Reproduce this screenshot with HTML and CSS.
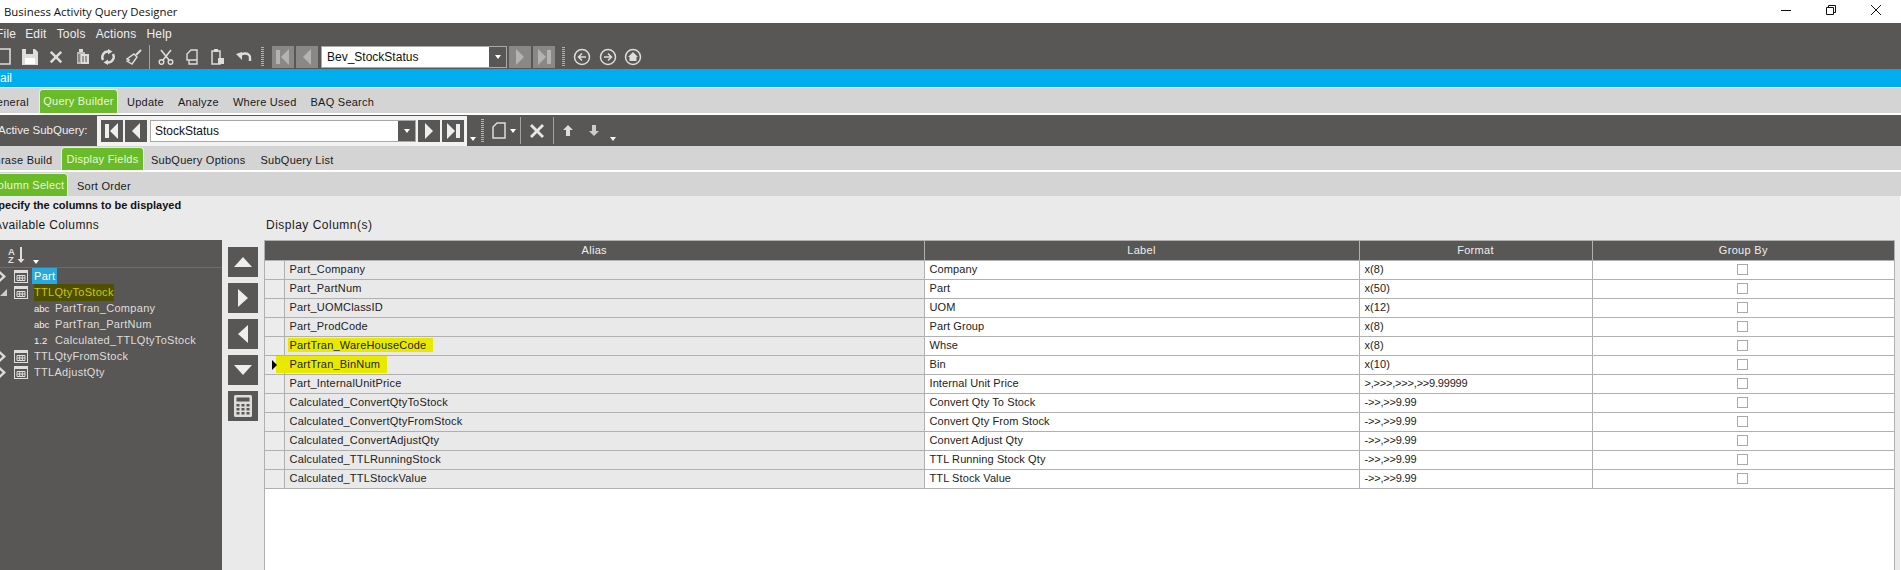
FILE: index.html
```html
<!DOCTYPE html>
<html lang="en">
<head>
<meta charset="utf-8">
<title>Business Activity Query Designer</title>
<link rel="stylesheet" href="styles.css">
</head>
<body>
<svg class="defs" width="0" height="0" aria-hidden="true">
  <symbol id="grid" viewBox="0 0 14 13"><rect x=".5" y=".5" width="13" height="12" fill="none" stroke="#ddd"/><rect x="1" y="1" width="12" height="2" fill="#ddd"/><path d="M3 5.5h8v5H3zM3 8h8M5.7 5.5v5M8.3 5.5v5" fill="none" stroke="#ddd"/></symbol>
  <symbol id="expand" viewBox="0 0 7 11"><path d="M0 0l6 5.5L0 11z" fill="#ddd"/><path d="M0 3l2.5 2.5L0 8z" fill="#595755"/></symbol>
  <symbol id="first" viewBox="0 0 22 22"><path d="M4 4h4v14H4zM9 11l8-8v16z" fill="currentColor"/></symbol>
  <symbol id="prev" viewBox="0 0 22 22"><path d="M7 11l8-8v16z" fill="currentColor"/></symbol>
  <symbol id="next" viewBox="0 0 22 22"><path d="M15 11L7 3v16z" fill="currentColor"/></symbol>
  <symbol id="last" viewBox="0 0 22 22"><path d="M14 4h4v14h-4zM13 11L5 3v16z" fill="currentColor"/></symbol>
  <symbol id="cross" viewBox="0 0 16 16"><path d="M3 1l5 5 5-5 2 2-5 5 5 5-2 2-5-5-5 5-2-2 5-5-5-5z" fill="currentColor"/></symbol>
  <symbol id="doc" viewBox="0 0 14 18"><path d="M5 1h8v15H1V5z" fill="none" stroke="currentColor" stroke-width="1.5"/></symbol>
</svg>

<div class="app">
  <header class="titlebar">
    <span class="title">Business Activity Query Designer</span>
    <div class="winctl">
      <svg width="10" height="10" viewBox="0 0 10 10"><path d="M0 5.5h10" stroke="#111" fill="none"/></svg>
      <svg width="10" height="10" viewBox="0 0 10 10"><path d="M.5 2.5h7v7h-7zM2.5 2.5v-2h7v7h-2" stroke="#111" fill="none"/></svg>
      <svg width="10" height="10" viewBox="0 0 10 10"><path d="M0 0l10 10M10 0L0 10" stroke="#111" fill="none"/></svg>
    </div>
  </header>

  <div class="chrome">
    <nav class="menu"><span class="m-file">File</span><span>Edit</span><span>Tools</span><span>Actions</span><span>Help</span></nav>
    <div class="toolbar">
      <svg class="ti ti-new" width="14" height="18" viewBox="0 0 14 18"><path d="M5 1h8v15H-4V1z" fill="none" stroke="#ddd" stroke-width="1.6"/></svg>
      <svg class="ti ti-save" width="16" height="16" viewBox="0 0 16 16"><path d="M0 0h13l3 3v13H0z" fill="#ddd"/><path d="M4 0h7v5H4z" fill="#595755"/><path d="M3 9h10v6H3z" fill="#fff"/></svg>
      <svg class="ti ti-x" width="14" height="14"><use href="#cross" color="#ddd"/></svg>
      <svg class="ti ti-del" width="14" height="16" viewBox="0 0 14 16"><path d="M1 3h8v12H1z" fill="#bbb"/><path d="M5 5h8v10H5z" fill="#ddd"/><path d="M3 0h4v3H3z" fill="#ddd"/><path d="M3 5v8M7 7v6M10 7v6" stroke="#595755" fill="none"/></svg>
      <svg class="ti ti-ref" width="16" height="16" viewBox="0 0 16 16"><path d="M8 2.500A5.700 5.700 0 0 0 3 11M8 13.500A5.700 5.700 0 0 0 13 5" fill="none" stroke="#ddd" stroke-width="2.4"/><path d="M8 0v5.500l4.500-3zM8 16v-5.500l-4.500 3z" fill="#ddd"/></svg>
      <svg class="ti ti-broom" width="16" height="16" viewBox="0 0 16 16"><path d="M15 1l-5 5" stroke="#ddd" stroke-width="2" fill="none"/><path d="M8 5l3 3-5 7-5-3 2-1-2-1z" fill="none" stroke="#ddd" stroke-width="1.4"/></svg>
      <i class="sep ti-sep1"></i>
      <svg class="ti ti-cut" width="16" height="16" viewBox="0 0 16 16"><path d="M3 1l8 10M13 1L5 11" stroke="#ddd" stroke-width="1.6" fill="none"/><circle cx="3.5" cy="13" r="2.3" fill="none" stroke="#ddd" stroke-width="1.5"/><circle cx="12.5" cy="13" r="2.3" fill="none" stroke="#ddd" stroke-width="1.5"/></svg>
      <svg class="ti ti-copy" width="12" height="16" viewBox="0 0 12 16"><path d="M5 1h6v10H1V5zM3 11v4h8v-4" fill="none" stroke="#ddd" stroke-width="1.4"/></svg>
      <svg class="ti ti-paste" width="14" height="16" viewBox="0 0 14 16"><path d="M1 2h8v13H1z" fill="none" stroke="#ddd" stroke-width="1.5"/><path d="M3 0h4v3H3zM7 9h6v6H7z" fill="#ddd"/></svg>
      <svg class="ti ti-undo" width="16" height="12" viewBox="0 0 16 12"><path d="M4 6a5 4 0 0 1 10 1v3" fill="none" stroke="#ddd" stroke-width="2.4"/><path d="M0 3l6 6V1z" fill="#ddd"/></svg>
      <i class="dots ti-dots1"></i>
      <span class="nb nb-off ti-first"><svg width="22" height="22"><use href="#first"/></svg></span>
      <span class="nb nb-off"><svg width="22" height="22"><use href="#prev"/></svg></span>
      <div class="combo combo-top"><span class="combo-text">Bev_StockStatus</span><span class="drop"><i class="caret"></i></span></div>
      <span class="nb nb-off"><svg width="22" height="22"><use href="#next"/></svg></span>
      <span class="nb nb-off"><svg width="22" height="22"><use href="#last"/></svg></span>
      <i class="dots ti-dots2"></i>
      <svg class="ti ti-back" width="18" height="18" viewBox="0 0 18 18"><circle cx="9" cy="9" r="7.5" fill="none" stroke="#ddd" stroke-width="1.5"/><path d="M13 9H6M9 5.500L5.500 9 9 12.500" fill="none" stroke="#ddd" stroke-width="1.5"/></svg>
      <svg class="ti ti-fwd" width="18" height="18" viewBox="0 0 18 18"><circle cx="9" cy="9" r="7.5" fill="none" stroke="#ddd" stroke-width="1.5"/><path d="M5 9h7M9 5.500L12.500 9 9 12.500" fill="none" stroke="#ddd" stroke-width="1.5"/></svg>
      <svg class="ti ti-home" width="18" height="18" viewBox="0 0 18 18"><circle cx="9" cy="9" r="7.5" fill="none" stroke="#ddd" stroke-width="1.5"/><path d="M9 4l5 5h-1.500v4h-7V9H4z" fill="#ddd"/></svg>
    </div>
  </div>

  <div class="bluebar"><span class="bluetext">ail</span></div>

  <div class="tabs tabs-1">
    <span class="tab t-general">General</span>
    <span class="tab active t-qb">Query Builder</span>
    <span class="tab t-update">Update</span>
    <span class="tab t-analyze">Analyze</span>
    <span class="tab t-where">Where Used</span>
    <span class="tab t-baq">BAQ Search</span>
  </div>

  <div class="subbar">
    <span class="sub-label">Active SubQuery:</span>
    <div class="sub-panel">
      <span class="nb nb-on"><svg width="22" height="22"><use href="#first"/></svg></span>
      <span class="nb nb-on"><svg width="22" height="22"><use href="#prev"/></svg></span>
      <div class="combo combo-sub"><span class="combo-text">StockStatus</span><span class="drop"><i class="caret"></i></span></div>
      <span class="nb nb-on"><svg width="22" height="22"><use href="#next"/></svg></span>
      <span class="nb nb-on"><svg width="22" height="22"><use href="#last"/></svg></span>
    </div>
    <i class="caret c-low c1"></i>
    <i class="dots s-dots"></i>
    <svg class="s-doc" width="14" height="18"><use href="#doc" color="#ddd"/></svg>
    <i class="caret c2"></i>
    <i class="sep s-sep1"></i>
    <svg class="s-x" width="16" height="16"><use href="#cross" color="#e6e6e6"/></svg>
    <i class="sep s-sep2"></i>
    <svg class="s-up" width="10" height="11" viewBox="0 0 10 11"><path d="M5 0l5 5H7v6H3V5H0z" fill="#ddd"/></svg>
    <svg class="s-down" width="10" height="11" viewBox="0 0 10 11"><path d="M5 11L0 6h3V0h4v6h3z" fill="#ccc"/></svg>
    <i class="caret c-low c3"></i>
  </div>

  <div class="tabs tabs-2">
    <span class="tab t-phrase">Phrase Build</span>
    <span class="tab active t-df">Display Fields</span>
    <span class="tab t-opts">SubQuery Options</span>
    <span class="tab t-list">SubQuery List</span>
  </div>

  <div class="tabs tabs-3">
    <span class="tab active t-cs">Column Select</span>
    <span class="tab t-sort">Sort Order</span>
  </div>

  <main class="content">
    <div class="specify">Specify the columns to be displayed</div>
    <div class="columns">
      <section class="left">
        <div class="left-title">Available Columns</div>
        <div class="left-panel">
          <div class="tree-bar">
            <svg class="az" width="17" height="16" viewBox="0 0 17 16"><path d="M10 0h2v12h2.500L11 16l-3.500-4H10z" fill="#ddd" transform="translate(2 0)"/><text x="0" y="7.500" class="az-t">A</text><text x="0" y="15.500" class="az-t">Z</text></svg>
            <i class="caret az-caret"></i>
          </div>
          <ul class="tree">
            <li class="node"><svg class="arrow" width="7" height="11"><use href="#expand"/></svg><svg class="gi" width="14" height="13"><use href="#grid"/></svg><span class="sel">Part</span></li>
            <li class="node"><svg class="arrow" width="7" height="7" viewBox="0 0 7 7"><path d="M7 0v7H0z" fill="#ccc"/></svg><svg class="gi" width="14" height="13"><use href="#grid"/></svg><span class="mark">TTLQtyToStock</span></li>
            <li class="leaf"><span class="kind">abc</span><span>PartTran_Company</span></li>
            <li class="leaf"><span class="kind">abc</span><span>PartTran_PartNum</span></li>
            <li class="leaf"><span class="kind">1.2</span><span>Calculated_TTLQtyToStock</span></li>
            <li class="node"><svg class="arrow" width="7" height="11"><use href="#expand"/></svg><svg class="gi" width="14" height="13"><use href="#grid"/></svg><span class="name">TTLQtyFromStock</span></li>
            <li class="node"><svg class="arrow" width="7" height="11"><use href="#expand"/></svg><svg class="gi" width="14" height="13"><use href="#grid"/></svg><span class="name">TTLAdjustQty</span></li>
          </ul>
        </div>
      </section>

      <div class="movers">
        <span class="mv"><svg width="18" height="10" viewBox="0 0 18 10"><path d="M9 0l9 10H0z" fill="#eee"/></svg></span>
        <span class="mv"><svg width="10" height="18" viewBox="0 0 10 18"><path d="M10 9L0 0v18z" fill="#eee"/></svg></span>
        <span class="mv"><svg width="10" height="18" viewBox="0 0 10 18"><path d="M0 9l10-9v18z" fill="#eee"/></svg></span>
        <span class="mv"><svg width="18" height="10" viewBox="0 0 18 10"><path d="M9 10L0 0h18z" fill="#eee"/></svg></span>
        <span class="mv"><svg width="18" height="22" viewBox="0 0 18 22"><rect width="18" height="22" rx="1.500" fill="#ddd"/><rect x="2.500" y="2.500" width="13" height="4" fill="#595755"/><g fill="#595755"><rect x="2.500" y="9" width="3" height="2.500"/><rect x="7.500" y="9" width="3" height="2.500"/><rect x="12.500" y="9" width="3" height="2.500"/><rect x="2.500" y="13" width="3" height="2.500"/><rect x="7.500" y="13" width="3" height="2.500"/><rect x="12.500" y="13" width="3" height="2.500"/><rect x="2.500" y="17" width="3" height="2.500"/><rect x="7.500" y="17" width="3" height="2.500"/><rect x="12.500" y="17" width="3" height="2.500"/></g></svg></span>
      </div>

      <section class="right">
        <div class="right-title">Display Column(s)</div>
        <div class="grid-wrap">
          <table class="grid">
            <colgroup><col class="c-gut"><col class="c-alias"><col class="c-label"><col class="c-format"><col class="c-group"></colgroup>
            <thead><tr><th colspan="2">Alias</th><th>Label</th><th>Format</th><th>Group By</th></tr></thead>
            <tbody>
              <tr><td class="gut"></td><td class="ro">Part_Company</td><td>Company</td><td>x(8)</td><td class="chk"><i class="box"></i></td></tr>
              <tr><td class="gut"></td><td class="ro">Part_PartNum</td><td>Part</td><td>x(50)</td><td class="chk"><i class="box"></i></td></tr>
              <tr><td class="gut"></td><td class="ro">Part_UOMClassID</td><td>UOM</td><td>x(12)</td><td class="chk"><i class="box"></i></td></tr>
              <tr><td class="gut"></td><td class="ro">Part_ProdCode</td><td>Part Group</td><td>x(8)</td><td class="chk"><i class="box"></i></td></tr>
              <tr><td class="gut"></td><td class="ro"><span class="hl hl-a">PartTran_WareHouseCode</span></td><td>Whse</td><td>x(8)</td><td class="chk"><i class="box"></i></td></tr>
              <tr><td class="gut"><i class="row-arrow"></i></td><td class="ro"><span class="hl hl-b">PartTran_BinNum</span></td><td>Bin</td><td>x(10)</td><td class="chk"><i class="box"></i></td></tr>
              <tr><td class="gut"></td><td class="ro">Part_InternalUnitPrice</td><td>Internal Unit Price</td><td class="fmt">&gt;,&gt;&gt;&gt;,&gt;&gt;&gt;,&gt;&gt;9.99999</td><td class="chk"><i class="box"></i></td></tr>
              <tr><td class="gut"></td><td class="ro">Calculated_ConvertQtyToStock</td><td>Convert Qty To Stock</td><td class="fmt">-&gt;&gt;,&gt;&gt;9.99</td><td class="chk"><i class="box"></i></td></tr>
              <tr><td class="gut"></td><td class="ro">Calculated_ConvertQtyFromStock</td><td>Convert Qty From Stock</td><td class="fmt">-&gt;&gt;,&gt;&gt;9.99</td><td class="chk"><i class="box"></i></td></tr>
              <tr><td class="gut"></td><td class="ro">Calculated_ConvertAdjustQty</td><td>Convert Adjust Qty</td><td class="fmt">-&gt;&gt;,&gt;&gt;9.99</td><td class="chk"><i class="box"></i></td></tr>
              <tr><td class="gut"></td><td class="ro">Calculated_TTLRunningStock</td><td>TTL Running Stock Qty</td><td class="fmt">-&gt;&gt;,&gt;&gt;9.99</td><td class="chk"><i class="box"></i></td></tr>
              <tr><td class="gut"></td><td class="ro">Calculated_TTLStockValue</td><td>TTL Stock Value</td><td class="fmt">-&gt;&gt;,&gt;&gt;9.99</td><td class="chk"><i class="box"></i></td></tr>
            </tbody>
          </table>
        </div>
      </section>
    </div>
  </main>
</div>
</body>
</html>
```

FILE: styles.css
```css
* { box-sizing: border-box; }
html, body { margin: 0; padding: 0; height: 100%; overflow: hidden; }
body { font: 12px "Liberation Sans", Arial, sans-serif; color: #1a1a1a; background: #fff; }
.defs { position: absolute; }
.app { width: 1901px; height: 570px; display: flex; flex-direction: column; overflow: hidden; }
ul { list-style: none; margin: 0; padding: 0; }
i { display: block; flex: none; font-style: normal; }
svg { display: block; flex: none; }

.titlebar { height: 23px; flex: none; display: flex; align-items: center; justify-content: space-between; background: #fff; }
.title { margin-left: 4px; font: 11.4px "Open Sans", "Liberation Sans", sans-serif; color: #111; white-space: nowrap; }
.winctl { display: flex; gap: 35px; margin-right: 20px; margin-top: -3px; align-items: center; }

.chrome { height: 46px; flex: none; background: #595755; color: #eee; }
.menu { height: 22px; display: flex; align-items: center; letter-spacing: .2px; }
.menu span { margin-right: 10px; }
.menu .m-file { margin-left: -4px; margin-right: 9px; }
.toolbar { height: 24px; display: flex; align-items: center; }
.ti-new { margin-left: -3px; }
.ti-save { margin-left: 11px; }
.ti-x { margin-left: 11px; }
.ti-del { margin-left: 13px; }
.ti-ref { margin-left: 10px; }
.ti-broom { margin-left: 10px; }
.sep { width: 1px; background: #a5a3a1; }
.ti-sep1 { height: 25px; margin-left: 7px; }
.ti-cut { margin-left: 8px; }
.ti-copy { margin-left: 12px; }
.ti-paste { margin-left: 13px; }
.ti-undo { margin-left: 11px; }
.dots { width: 3px; background: repeating-linear-gradient(#b5b3b1 0 1px, transparent 1px 2px); }
.ti-dots1 { height: 20px; margin-left: 9px; }
.ti-first { margin-left: 8px; }
.ti-dots2 { height: 20px; margin-left: 5px; }
.ti-back { margin-left: 8px; }
.ti-fwd { margin-left: 8px; }
.ti-home { margin-left: 7px; }

.nb { width: 22px; height: 22px; flex: none; margin-right: 2px; display: block; }
.nb-off { background: #8a8887; color: #b5b3b2; }
.nb-on { background: #595755; color: #eee; }
.combo { height: 22px; display: flex; align-items: stretch; background: #fff; border: 1px solid #a8a8a8; flex: none; color: #111; }
.combo-top { width: 186px; margin: 0 2px 0 1px; }
.combo-sub { width: 266px; margin: 0 2px 0 1px; }
.combo-text { flex: 1; padding: 0 0 0 5px; line-height: 20px; }
.combo-sub .combo-text { padding-left: 4px; }
.drop { width: 17px; background: #595755; display: flex; align-items: center; justify-content: center; }
.caret { width: 0; height: 0; border: 3.5px solid transparent; border-top: 4px solid #fff; border-bottom: 0; }

.bluebar { height: 18px; flex: none; background: #00adef; color: #fff; display: flex; align-items: center; margin-bottom: 1px; }

.tabs { display: flex; align-items: stretch; flex: none; background: #d4d4d4; overflow: hidden; white-space: nowrap; font-size: 11px; letter-spacing: .25px; }
.tab { display: block; padding-top: 7px; }
.tab.active { background: #69bb2a; color: #e9f7d8; border: 1px solid #e4f2d4; border-bottom: 0; border-radius: 4px 4px 0 0; padding: 5px 0 0; text-align: center; }
.tabs-1 { height: 25px; margin-bottom: 2px; padding-top: 1px; }
.t-general { margin-left: -12px; width: 45px; }
.t-qb { width: 79px; margin-left: 6px; }
.t-update { margin-left: 9px; }
.t-analyze { margin-left: 14px; }
.t-where { margin-left: 14px; }
.t-baq { margin-left: 14px; }

.subbar { height: 31px; flex: none; background: #595755; display: flex; align-items: center; color: #eee; }
.sub-label { width: 97px; flex: none; white-space: nowrap; font-size: 11.5px; text-indent: -2px; margin-top: -1px; }
.sub-panel { width: 370px; height: 30px; margin-top: 1px; padding-left: 4px; flex: none; background: #f2f2f2; display: flex; align-items: center; }
.c-low { margin-top: 16px; }
.c1 { margin-left: 3px; }
.s-dots { height: 23px; margin-left: 5px; }
.s-doc { margin-left: 8px; }
.c2 { margin-left: 4px; }
.s-sep1 { height: 27px; margin-left: 4px; }
.s-x { margin-left: 8px; }
.s-sep2 { height: 27px; margin-left: 8px; }
.s-up { margin-left: 9px; }
.s-down { margin-left: 16px; }
.c3 { margin-left: 11px; }

.tabs-2 { height: 24px; margin: 0 0 2px; padding-top: 1px; }
.t-phrase { margin-left: -13px; width: 66px; }
.t-df { width: 83px; margin-left: 8px; }
.t-opts { margin-left: 7px; }
.t-list { margin-left: 15px; }
.tabs-3 { height: 24px; padding-top: 1px; }
.t-cs { width: 82px; margin-left: -14px; }
.t-sort { margin-left: 9px; }

.content { flex: 1; min-height: 0; background: #eaeaea; display: flex; flex-direction: column; border-right: 1px solid #fff; }
.specify { height: 19px; padding-top: 2px; margin-left: -9px; flex: none; font-weight: 700; font-size: 11px; color: #111; line-height: 15px; white-space: nowrap; }
.columns { flex: 1; min-height: 0; display: flex; }
.left { width: 222px; flex: none; display: flex; flex-direction: column; }
.left-title { height: 25px; margin-left: -6px; letter-spacing: .35px; white-space: nowrap; line-height: 14px; padding-top: 3px; }
.left-panel { flex: 1; background: #595755; color: #ddd; }
.tree-bar { height: 28px; border-bottom: 1px solid #6e6c6a; display: flex; padding: 7px 0 0 8px; }
.az-t { font: 700 9.5px "Liberation Sans", sans-serif; fill: #ddd; }
.az-caret { margin: 13px 0 0 8px; }
.tree { font-size: 11px; letter-spacing: .3px; }
.node, .leaf { height: 16px; display: flex; align-items: center; white-space: nowrap; }
.arrow { margin-right: 7px; }
.gi { margin-right: 4px; }
.name { margin-left: 2px; }
.sel { background: #29a9e0; color: #fff; height: 16px; line-height: 16px; padding: 0 2px; width: 25px; }
.mark { background: #4f4f00; color: #c9c900; margin-left: 2px; height: 17px; line-height: 16px; }
.leaf { padding-left: 34px; }
.kind { width: 21px; font-size: 9.5px; letter-spacing: 0; color: #f2f2f2; }

.movers { width: 42px; flex: none; display: flex; flex-direction: column; gap: 6px; padding: 32px 0 0 6px; }
.mv { width: 30px; height: 30px; background: #595755; display: flex; align-items: center; justify-content: center; }

.right { flex: 1; min-width: 0; display: flex; flex-direction: column; padding-right: 5px; }
.right-title { height: 25px; padding-left: 2px; letter-spacing: .5px; padding-top: 3px; white-space: nowrap; }
.grid-wrap { flex: 1; background: #fff; border: solid #b0b0b0; border-width: 1px 1px 0; }
.grid { border-collapse: collapse; table-layout: fixed; width: 1629px; font-size: 11px; letter-spacing: .1px; }
.c-gut { width: 19px; }
.c-alias { width: 640px; }
.c-label { width: 435px; }
.c-format { width: 233px; }
.c-group { width: 302px; }
.grid th { height: 19px; background: #595755; color: #eee; font-weight: 400; padding: 0; letter-spacing: .3px; border-right: 1px solid #b0b0b0; border-bottom: 1px solid #b0b0b0; text-align: center; }
.grid td { height: 19px; padding: 0 0 2px 5px; border-right: 1px solid #b0b0b0; border-bottom: 1px solid #b0b0b0; color: #222; white-space: nowrap; }
.grid th:last-child, .grid td:last-child { border-right: 0; }
.grid td.gut { background: #ececec; padding: 0; }
.grid td.ro { background: #e9e9e9; letter-spacing: .2px; }
.grid td.fmt { letter-spacing: -.2px; }
.grid td.chk { padding: 0; }
.box { width: 11px; height: 11px; margin: 0 auto; background: #fff; border: 1px solid #a9a9a9; position: relative; left: -1px; }
.hl { background: #e9e900; }
.hl-a { padding: 1px 7px 1px 2px; margin-left: -2px; }
.hl-b { padding: 2px 7px 3px 14px; margin-left: -14px; }
.row-arrow { width: 0; height: 0; margin-left: 7px; border: 5px solid transparent; border-left: 5px solid #000; border-right: 0; position: relative; z-index: 1; }
```
